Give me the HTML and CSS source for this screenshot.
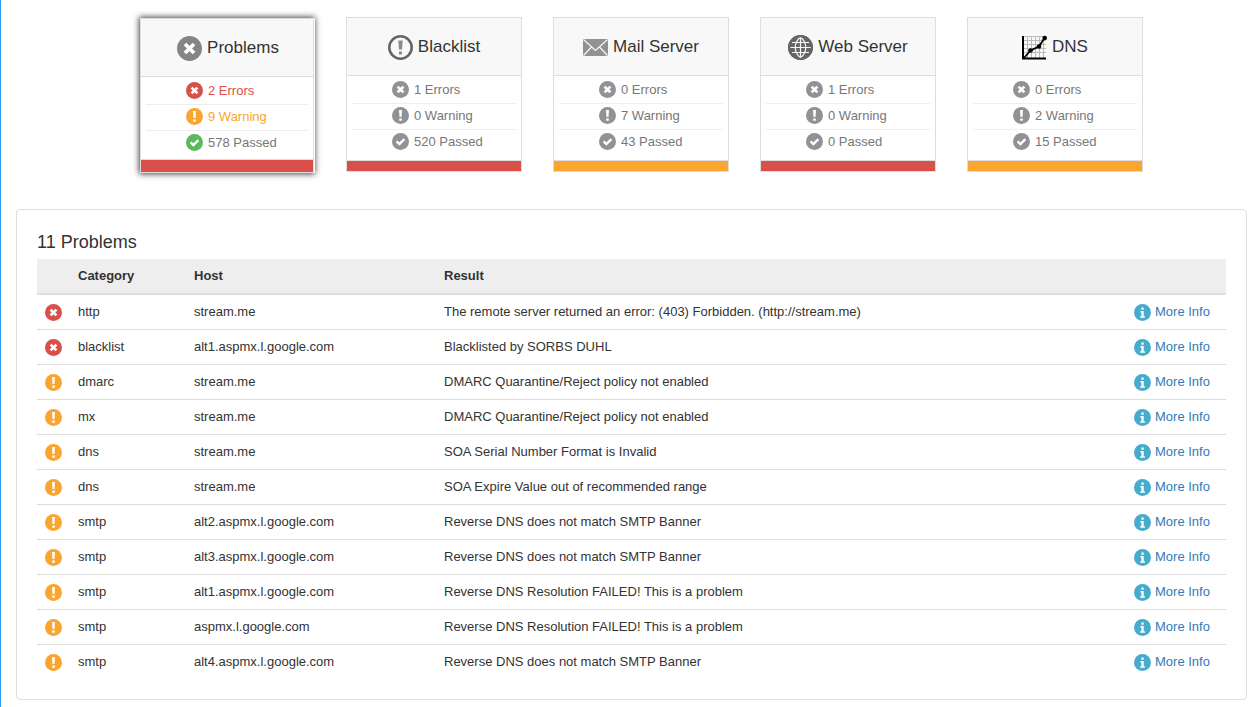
FILE: index.html
```html
<!DOCTYPE html>
<html lang="en">
<head>
  <meta charset="UTF-8">
  <meta name="viewport" content="width=device-width, initial-scale=1.0">
  <title>Domain Health</title>
  <link rel="stylesheet" href="styles.css">
</head>
<body>
  <!-- icons shared by the cards and the table -->
  <svg class="sprite" width="0" height="0">
    <symbol id="error" viewBox="0 0 17 17">
      <circle cx="8.5" cy="8.5" r="8.5" fill="currentColor"/>
      <path d="M5.6 5.6l5.8 5.8M11.4 5.6l-5.8 5.8" stroke="#fff" stroke-width="2.7"/>
    </symbol>
    <symbol id="warning" viewBox="0 0 17 17">
      <circle cx="8.5" cy="8.5" r="8.5" fill="currentColor"/>
      <path d="M7 3h3l-.5 7h-2zM7.2 11.4h2.6v2.3h-2.6z" fill="#fff"/>
    </symbol>
    <symbol id="passed" viewBox="0 0 17 17">
      <circle cx="8.5" cy="8.5" r="8.5" fill="currentColor"/>
      <path d="M4.6 8.4l2.8 2.7 5-5" fill="none" stroke="#fff" stroke-width="2.4"/>
    </symbol>
    <symbol id="info" viewBox="0 0 17 17">
      <circle cx="8.5" cy="8.5" r="8.5" fill="currentColor"/>
      <path d="M7.4 3.6h2.3v2.1H7.4zM6.4 7h3.3v5.2h1.2v1.5H6.2v-1.5h1.2V8.5h-1z" fill="#fff"/>
    </symbol>
  </svg>

  <div class="cards" id="cards"></div>

  <div class="panel">
    <h2>11 Problems</h2>
    <table id="problemTable">
      <thead>
        <tr>
          <th class="col-icon"></th>
          <th class="col-category">Category</th>
          <th class="col-host">Host</th>
          <th>Result</th>
          <th class="col-more"></th>
        </tr>
      </thead>
      <tbody id="problemTableBody"></tbody>
    </table>
  </div>

  <script src="script.js"></script>
</body>
</html>
```
FILE: styles.css
```css
* {
  box-sizing: border-box;
}

body {
  margin: 0;
  height: 707px;
  overflow: hidden;
  border-left: 1px solid #2f9bf0;
  background-color: #fff;
  font-family: "Liberation Sans", Arial, sans-serif;
  font-size: 13px;
  line-height: 18px;
  color: #333;
}

.sprite {
  position: absolute;
}

.icon {
  width: 17px;
  height: 17px;
  flex: none;
}

.cards {
  display: flex;
  gap: 31px;
  height: 172px;
  padding: 17px 0 0 138px;
}

.card {
  width: 176px;
  height: 155px;
  border: 1px solid #ddd;
  display: flex;
  flex-direction: column;
}

.card.active {
  width: 174px;
  margin: 1px;
  box-shadow: 1px 0 0 #fff, 0 0 6px 1px #444;
}

.card-head {
  height: 58px;
  flex: none;
  display: flex;
  align-items: center;
  justify-content: center;
  gap: 5px;
  padding-top: 2px;
  border-bottom: 1px solid #ddd;
  background-color: #f8f8f8;
  font-size: 17px;
}

.card.active .card-head {
  padding-left: 2px;
}

.card-head svg {
  width: 25px;
  height: 25px;
}

.card-head span {
  margin-top: -2px;
}

.card ul {
  list-style-type: none;
  margin: 0;
  padding: 2px 5px 0;
  flex: 1;
}

.card li {
  display: flex;
  align-items: center;
  gap: 5px;
  height: 26px;
  padding: 0 0 2px 40px;
  border-bottom: 1px solid #eee;
  color: #777;
}

.card li:last-child {
  border-bottom-color: transparent;
}

.card li .icon {
  color: #919295;
}

.card.active .error,
.card.active .error .icon {
  color: #d94f4a;
}

.card.active .warning,
.card.active .warning .icon {
  color: #f9a530;
}

.card.active .passed .icon {
  color: #5cb85c;
}

.card-bar {
  height: 11px;
  border-top: 1px solid #ddd;
}

.card.active .card-bar {
  height: 13px;
}

.bar-red {
  background-color: #d94f4a;
}

.bar-orange {
  background-color: #f9a530;
}

.panel {
  width: 1231px;
  height: 491px;
  margin: 37px 0 0 15px;
  padding: 22px 20px 0;
  border: 1px solid #ddd;
  border-radius: 4px;
}

.panel h2 {
  margin: 0 0 7px;
  font-size: 18px;
  font-weight: normal;
  line-height: 20px;
}

#problemTable {
  width: 100%;
  table-layout: fixed;
  border-collapse: separate;
  border-spacing: 0;
}

#problemTable th {
  height: 36px;
  padding: 0 8px;
  background-color: #eee;
  border-bottom: 2px solid #ddd;
  text-align: left;
}

#problemTable td {
  height: 35px;
  padding: 0 8px;
  border-bottom: 1px solid #ddd;
}

#problemTable tbody tr:last-child td {
  border-bottom-color: transparent;
}

#problemTable .icon {
  display: block;
  margin-top: 1px;
}

.col-icon {
  width: 33px;
}

.col-category {
  width: 116px;
}

.col-host {
  width: 250px;
}

.col-more {
  width: 100px;
}

#problemTable .error {
  color: #d94f4a;
}

#problemTable .warning {
  color: #f9a530;
}

.more {
  display: flex;
  align-items: center;
  gap: 4px;
  color: #337ab7;
  text-decoration: none;
}

.more .icon {
  color: #46acce;
}
```
FILE: script.js
```js
const headIcons = {
  problems: '<circle cx="12.5" cy="12.5" r="12.5" fill="#858585"/><path d="M8 8l9 9M17 8l-9 9" stroke="#fff" stroke-width="3.8"/>',
  blacklist: '<circle cx="12.5" cy="12.5" r="11.2" fill="none" stroke="#666" stroke-width="2.6"/><path d="M10.3 5.5h4.4l-.7 9h-3zM11 16.5h3v3h-3z" fill="#8b8b8b"/>',
  mail: '<path d="M0 4h25v17H0z" fill="#919295"/><path d="M.5 4.5l12 11 12-11M.5 20.5l8-8.5M24.5 20.5l-8-8.5" fill="none" stroke="#f8f8f8" stroke-width="1.2"/>',
  web: '<circle cx="12.5" cy="12.5" r="12.5" fill="#666"/><path d="M12.5 2v21M2 12.5h21M4 7.5h17M4 17.5h17M12.5 2c-7 6-7 15 0 21M12.5 2c7 6 7 15 0 21" fill="none" stroke="#f8f8f8" stroke-width="1.2"/><circle cx="12.5" cy="12.5" r="11.3" fill="none" stroke="#666" stroke-width="2.2"/>',
  dns: '<path d="M2 1.5h22M2 5.5h22M2 9.5h22M2 13.5h22M2 17.5h22M5.5 1v22M9.5 1v22M13.5 1v22M17.5 1v22M21.5 1v22" stroke="#bbb"/><path d="M1 1v22.5h23" fill="none" stroke="#000" stroke-width="2"/><path d="M2 23l6.5-7.5 8.5-4 5.5-8.5" fill="none" stroke="#000" stroke-width="1.8"/><circle cx="8.5" cy="15.5" r="2.3"/><circle cx="17" cy="11.5" r="2.3"/><circle cx="22.7" cy="3" r="2.3"/>'
};

const cards = [
  { title: 'Problems', icon: 'problems', errors: 2, warnings: 9, passed: 578, bar: 'red', active: true },
  { title: 'Blacklist', icon: 'blacklist', errors: 1, warnings: 0, passed: 520, bar: 'red' },
  { title: 'Mail Server', icon: 'mail', errors: 0, warnings: 7, passed: 43, bar: 'orange' },
  { title: 'Web Server', icon: 'web', errors: 1, warnings: 0, passed: 0, bar: 'red' },
  { title: 'DNS', icon: 'dns', errors: 0, warnings: 2, passed: 15, bar: 'orange' }
];

const problems = [
  { type: 'error', category: 'http', host: 'stream.me', result: 'The remote server returned an error: (403) Forbidden. (http://stream.me)' },
  { type: 'error', category: 'blacklist', host: 'alt1.aspmx.l.google.com', result: 'Blacklisted by SORBS DUHL' },
  { type: 'warning', category: 'dmarc', host: 'stream.me', result: 'DMARC Quarantine/Reject policy not enabled' },
  { type: 'warning', category: 'mx', host: 'stream.me', result: 'DMARC Quarantine/Reject policy not enabled' },
  { type: 'warning', category: 'dns', host: 'stream.me', result: 'SOA Serial Number Format is Invalid' },
  { type: 'warning', category: 'dns', host: 'stream.me', result: 'SOA Expire Value out of recommended range' },
  { type: 'warning', category: 'smtp', host: 'alt2.aspmx.l.google.com', result: 'Reverse DNS does not match SMTP Banner' },
  { type: 'warning', category: 'smtp', host: 'alt3.aspmx.l.google.com', result: 'Reverse DNS does not match SMTP Banner' },
  { type: 'warning', category: 'smtp', host: 'alt1.aspmx.l.google.com', result: 'Reverse DNS Resolution FAILED! This is a problem' },
  { type: 'warning', category: 'smtp', host: 'aspmx.l.google.com', result: 'Reverse DNS Resolution FAILED! This is a problem' },
  { type: 'warning', category: 'smtp', host: 'alt4.aspmx.l.google.com', result: 'Reverse DNS does not match SMTP Banner' }
];

function icon(name) {
  return `<svg class="icon ${name}"><use href="#${name}"/></svg>`;
}

cards.forEach(card => {
  const div = document.createElement('div');
  div.className = card.active ? 'card active' : 'card';
  div.innerHTML = `
    <div class="card-head"><svg viewBox="0 0 25 25">${headIcons[card.icon]}</svg><span>${card.title}</span></div>
    <ul>
      <li class="error">${icon('error')}${card.errors} Errors</li>
      <li class="warning">${icon('warning')}${card.warnings} Warning</li>
      <li class="passed">${icon('passed')}${card.passed} Passed</li>
    </ul>
    <div class="card-bar bar-${card.bar}"></div>
  `;
  document.getElementById('cards').appendChild(div);
});

problems.forEach(problem => {
  const row = document.createElement('tr');
  row.innerHTML = `
    <td>${icon(problem.type)}</td>
    <td>${problem.category}</td>
    <td>${problem.host}</td>
    <td>${problem.result}</td>
    <td><a class="more" href="#">${icon('info')}More Info</a></td>
  `;
  document.getElementById('problemTableBody').appendChild(row);
});
```
